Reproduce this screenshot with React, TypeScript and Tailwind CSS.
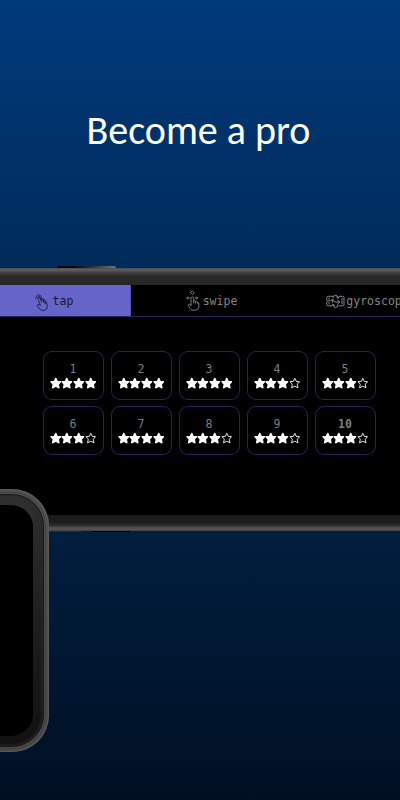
import { clsx } from "clsx";

const levels = [4, 4, 4, 3, 3, 3, 4, 3, 3, 3];

function TapIcon() {
  return (
    <svg width="14" height="18" viewBox="0 0 14 18" fill="none" stroke="currentColor" strokeWidth="0.8" strokeLinecap="round" strokeLinejoin="round" className="shrink-0">
      <path d="M5.2 12 2.8 5.2Q2.4 3.4 4 3.6L6.8 9M5.2 12Q2 10.8 2 12.2L4.4 16Q6 17.6 9 17.4 12.6 16.8 12.4 13.2L11.4 9.2Q10.6 7.2 10 8.4L10.6 10.6M10 8.4Q8.8 5.8 8.2 7.4L9 10M8.2 7.4Q6.8 5.2 6.3 7.2" />
      <path d="M1 5.6Q.8 1.6 4.4 1.9L6.6 4M4 3.6 8.2 6.6M5 5.2 9.4 6.8" />
    </svg>
  );
}

function SwipeIcon() {
  return (
    <svg width="14" height="22" viewBox="0 0 14 22" fill="none" stroke="currentColor" strokeWidth="0.9" strokeLinecap="round" strokeLinejoin="round" className="shrink-0">
      <path d="M6.5 1 8.2 2.8 6.5 4.5 4.8 2.8ZM.8 8H4M2 6.7.7 8 2 9.3M9 8h2.8M10.4 6.7 11.7 8l-1.3 1.3" />
      <path d="M5 15.5V8.3Q5.2 6.7 6.5 6.8 7.7 7 7.7 8.5V13M7.7 11.2Q9 9.6 9.6 11.3V13M9.6 11.8Q10.9 10.6 11.4 12.4V13.4M11.4 12.6Q12.9 12 12.8 14V17Q12.4 20.3 8.8 20.3H7Q5 20.3 4 18.3L2.2 15.4Q2.3 13.8 3.6 14.3L5 15.5" />
    </svg>
  );
}

function GyroscopeIcon() {
  return (
    <svg width="19" height="15" viewBox="0 0 19 15" fill="none" stroke="currentColor" strokeWidth="1" strokeLinecap="round" strokeLinejoin="round" className="shrink-0">
      <path d="M6.5 2.3H2Q.8 2.3.8 3.5v1.8M.8 8v2.6q0 1.2 1.2 1.2H5.5M13 2.3h3.8q1.2 0 1.2 1.2v7.1q0 1.2-1.2 1.2H13M3 4.2v1M3 8.6v1.2M16 4.2v5.8" />
      <path d="M7 3.6Q7.4 1 9.8 1.2 11.8 1.4 12.2 4M10.5 3 12.2 4.4 13.6 2.6M12 11Q11.6 13.8 9.3 13.6 7.3 13.4 6.9 10.6M5.3 12 6.9 10.2 8.7 11.8M.8 6.8H4.4L6.4 5.4V8.5M6.6 5.2Q8 8.3 10 8L13.6 8M11.6 6.2 14 8 11.7 9.8" />
    </svg>
  );
}

function Star({ filled }: { filled: boolean }) {
  return (
    <svg width="11.6" height="12" viewBox="0 0 11.6 12" className="shrink-0">
      <path
        d="M5.8 1.3 7.2 4.3 10.6 4.7 8.3 7.2 9 10.8 5.8 9.2 2.6 10.8 3.3 7.2 1 4.7 4.4 4.3Z"
        fill={filled ? "#fff" : "none"}
        stroke="#fff"
        strokeWidth={filled ? 1.3 : 0.9}
        strokeLinejoin="round"
      />
    </svg>
  );
}

function Level({ number, stars }: { number: number; stars: number }) {
  return (
    <div className="flex h-[49px] w-[61px] flex-col items-center rounded-[9px] border border-[#25235a] pt-[10px]">
      <span className={clsx("text-[11.5px] leading-[14px] text-[#7c7c7c]", number === 10 && "font-bold")}>{number}</span>
      <div className="mt-px flex">
        {[0, 1, 2, 3].map((i) => (
          <Star key={i} filled={i < stars} />
        ))}
      </div>
    </div>
  );
}

function LandscapePhone() {
  return (
    <div className="relative h-[263px] w-full">
      <div className="absolute -top-[2px] left-[57px] h-[2px] w-[59px] rounded-t-sm bg-linear-to-r from-black via-[#222] to-[#6f7780]" />
      <div className="absolute -bottom-px left-[49px] h-px w-8 bg-[#292d3b]" />
      <div className="absolute -bottom-px left-[92px] h-px w-[38px] bg-[#05070c]" />
      <div className="flex h-full flex-col">
        <div className="h-[17px] shrink-0 bg-[linear-gradient(to_bottom,#3a414c_0,#5e5e5e_1px,#555_3px,#444_4px,#393939_6px,#292929_8px,#272727_17px)]" />
        <div className="h-[230px] overflow-hidden bg-black font-['DejaVu_Sans_Mono',monospace]">
          <div className="-ml-[26px] flex h-8 w-[472px] border-b border-[#28265c] text-[11.5px] text-[#858585]">
            <div className="flex w-[157px] items-center justify-center gap-1 border-r border-[#5554a7] bg-[#6664c8] pl-1 pt-[2px] text-[#171633]">
              <TapIcon />
              tap
            </div>
            <div className="flex w-[157px] items-center justify-center gap-[3px] pl-1">
              <SwipeIcon />
              <span className="pt-[2px]">swipe</span>
            </div>
            <div className="flex w-[157px] items-center justify-center gap-px pl-[2px] pt-[2px]">
              <GyroscopeIcon />
              gyroscope
            </div>
          </div>
          <div className="ml-[42.5px] mt-[34px] grid w-[333px] grid-cols-5 gap-x-[7px] gap-y-[6px]">
            {levels.map((stars, i) => (
              <Level key={i} number={i + 1} stars={stars} />
            ))}
          </div>
        </div>
        <div className="h-4 shrink-0 bg-[linear-gradient(to_bottom,#1b1b1b_0,#1d1d1d_8px,#262626_9px,#303030_11px,#4b4b4b_12px,#555_15px,#333_16px)]" />
      </div>
    </div>
  );
}

function PortraitPhone() {
  return (
    <div className="absolute -left-[120px] top-[489px] h-[263px] w-[169px] rounded-[37px] bg-[linear-gradient(to_bottom,#515151,#494949)] p-[3px] shadow-[inset_0_0_1px_1px_#5a5a5a]">
      <div className="h-full rounded-[34px] border border-[#404040] p-px">
        <div className="h-full rounded-[32px] border border-[#171717] bg-linear-to-b from-[#303030] via-[#1e1e1e] to-[#111] p-[10px] shadow-[inset_0_0_3px_1px_#2b2b2b]">
          <div className="h-full rounded-[22px] bg-black" />
        </div>
      </div>
    </div>
  );
}

export default function App() {
  return (
    <div className="relative h-[800px] w-[400px] overflow-hidden bg-[linear-gradient(to_bottom,#003a7c_0%,#002c5c_32%,#001e3e_67%,#001023_100%)]">
      <h1 className="h-[268px] whitespace-nowrap pr-[3px] pt-[107px] text-center font-['Carlito','Lato',sans-serif] text-[40px] leading-[48px] text-white">
        Become a pro
      </h1>
      <LandscapePhone />
      <PortraitPhone />
    </div>
  );
}
